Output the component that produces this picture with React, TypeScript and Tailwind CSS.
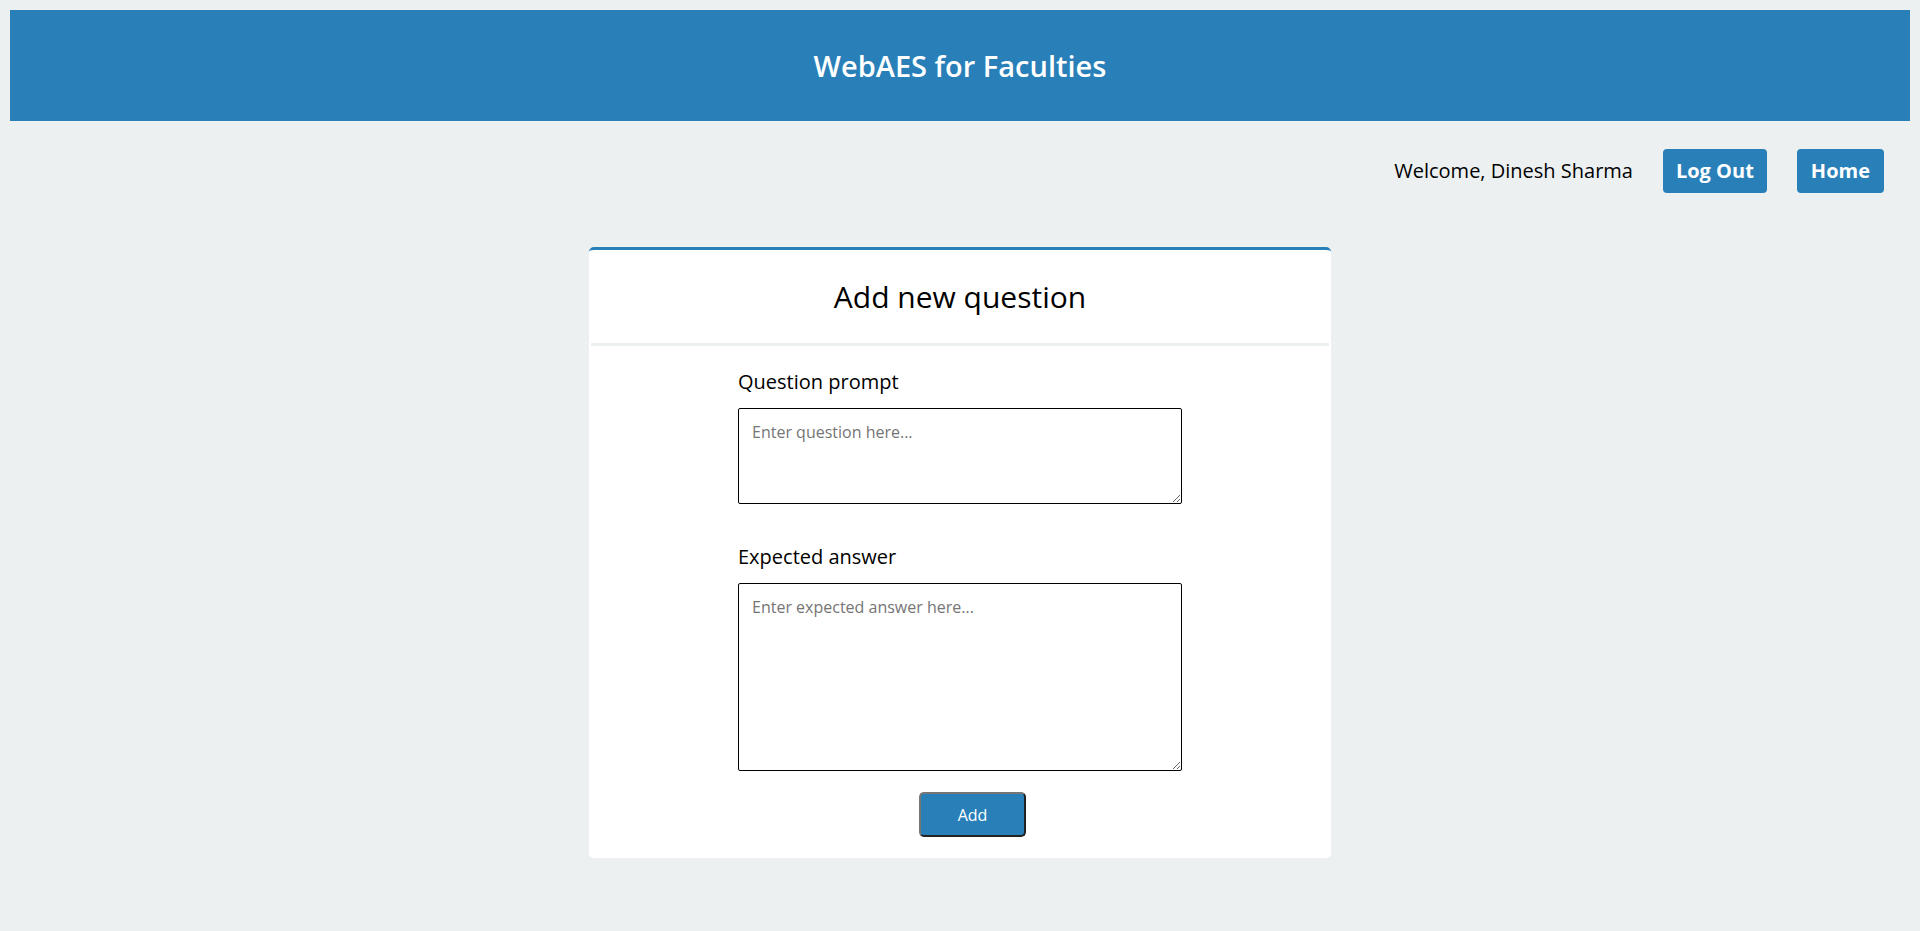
import React, { useState } from "react";

export default function App() {
  const [prompt, setPrompt] = useState("");
  const [answer, setAnswer] = useState("");

  return (
    <div className="min-h-screen bg-[#ecf0f1] px-[10px] pt-[10px] pb-10 font-['Open_Sans',sans-serif] text-black">
      {/* Header */}
      <header className="h-[111px] bg-[#2980b9] flex items-center justify-center">
        <h1 className="text-[29px] font-semibold text-white">WebAES for Faculties</h1>
      </header>

      {/* User bar */}
      <div className="mt-[28px] flex items-center justify-end pr-[26px]">
        <span className="text-[20px] leading-[28px] mr-[30px]">Welcome, Dinesh Sharma</span>
        <button className="h-[44px] px-[13px] rounded-[4px] bg-[#2980b9] text-white text-[20px] font-bold mr-[30px]">
          Log Out
        </button>
        <button className="h-[44px] px-[14px] rounded-[4px] bg-[#2980b9] text-white text-[20px] font-bold">
          Home
        </button>
      </div>

      {/* Card */}
      <div className="mt-[54px] mx-auto w-[742px] bg-white rounded-[5px] border-t-[3px] border-[#2980b9]">
        <div className="h-[93px] flex items-center justify-center">
          <h2 className="text-[30px]">Add new question</h2>
        </div>
        <div className="mx-[2px] h-[3px] bg-[#ecf0f1]" />

        <form
          className="w-[444px] mx-auto pt-[22px] pb-[21px] flex flex-col"
          onSubmit={(e) => e.preventDefault()}
        >
          <label className="text-[20px] leading-[28px]">Question prompt</label>
          <textarea
            value={prompt}
            onChange={(e) => setPrompt(e.target.value)}
            placeholder="Enter question here..."
            className="mt-[12px] h-[96px] border border-black rounded-[2px] px-[13px] py-[11px] text-[16px] leading-[24px] placeholder:text-[#757575] outline-none"
          />

          <label className="mt-[39px] text-[20px] leading-[28px]">Expected answer</label>
          <textarea
            value={answer}
            onChange={(e) => setAnswer(e.target.value)}
            placeholder="Enter expected answer here..."
            className="mt-[12px] h-[188px] border border-black rounded-[2px] px-[13px] py-[11px] text-[16px] leading-[24px] placeholder:text-[#757575] outline-none"
          />

          <button
            type="submit"
            className="mt-[21px] self-start ml-[181px] w-[107px] h-[45px] bg-[#2980b9] text-white text-[16px] rounded-[5px] border-2 border-t-[#767676] border-l-[#767676] border-b-[#222222] border-r-[#222222]"
          >
            Add
          </button>
        </form>
      </div>
    </div>
  );
}
